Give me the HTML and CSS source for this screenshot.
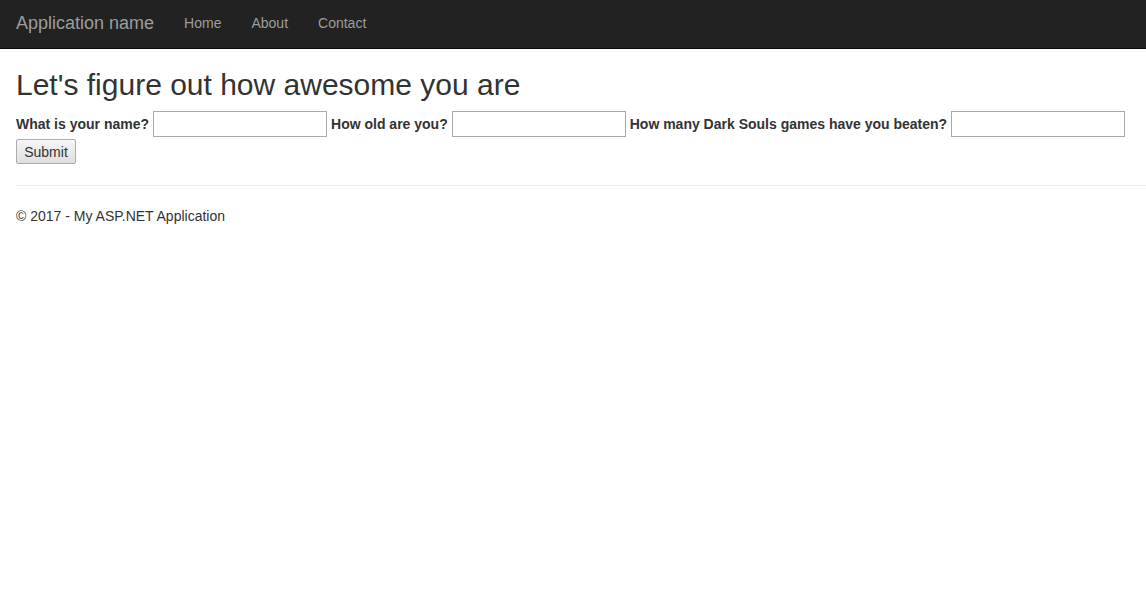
FILE: index.html
```html
<!DOCTYPE html>
<html>
<head>
<meta charset="utf-8">
<title>Application name</title>
<link rel="stylesheet" href="styles.css">
</head>
<body>
<header class="navbar">
  <a class="brand" href="#">Application name</a>
  <nav class="nav">
    <a href="#">Home</a>
    <a href="#">About</a>
    <a href="#">Contact</a>
  </nav>
</header>
<main class="body-content">
  <h2 class="title">Let's figure out how awesome you are</h2>
  <form class="quiz">
    <label class="lbl" for="name">What is your name?</label>
    <input class="field" id="name" type="text">
    <label class="lbl" for="age">How old are you?</label>
    <input class="field" id="age" type="text">
    <label class="lbl" for="ds">How many Dark Souls games have you beaten?</label>
    <input class="field" id="ds" type="text">
    <button class="submit" type="button">Submit</button>
  </form>
  <hr class="rule">
  <footer class="footer">© 2017 - My ASP.NET Application</footer>
</main>
</body>
</html>
```
FILE: styles.css
```css
html, body {
  margin: 0;
  padding: 0;
  background: #fff;
  font-family: "Liberation Sans", Arial, sans-serif;
  font-size: 14px;
  line-height: 20px;
  color: #333;
}
.navbar {
  height: 49px;
  background: #222;
  border-bottom: 1px solid #080808;
  display: flex;
  align-items: center;
  box-sizing: border-box;
  padding-bottom: 3px;
}
.brand {
  color: #9d9d9d;
  font-size: 18px;
  text-decoration: none;
  padding: 0 15px 0 16px;
  line-height: 20px;
}
.nav {
  display: flex;
  margin-left: 0;
}
.nav a {
  color: #9d9d9d;
  text-decoration: none;
  padding: 0 15px;
  line-height: 20px;
}
.body-content {
  padding: 0 0 0 16px;
}
.title {
  margin: 19px 0 10px;
  font-size: 30px;
  font-weight: 400;
  line-height: 33px;
  color: #333;
}
.quiz {
  display: flex;
  flex-wrap: wrap;
  align-items: center;
  column-gap: 4px;
  row-gap: 2px;
  margin: 0;
  padding-right: 20px;
}
.lbl {
  font-weight: 700;
}
.field {
  width: 174px;
  height: 26px;
  box-sizing: border-box;
  border: 1px solid #a9a9a9;
  padding: 1px 2px;
  font: inherit;
  background: #fff;
}
.submit {
  width: 60px;
  height: 25px;
  box-sizing: border-box;
  border: 1px solid #adadad;
  border-radius: 2px;
  background: linear-gradient(#f6f6f6, #dedede);
  font-family: "Liberation Sans", Arial, sans-serif;
  font-size: 14px;
  color: #333;
  padding: 0;
}
.rule {
  margin: 21px 0 20px;
  border: 0;
  border-top: 1px solid #eee;
}
.footer {
  line-height: 20px;
}
```
